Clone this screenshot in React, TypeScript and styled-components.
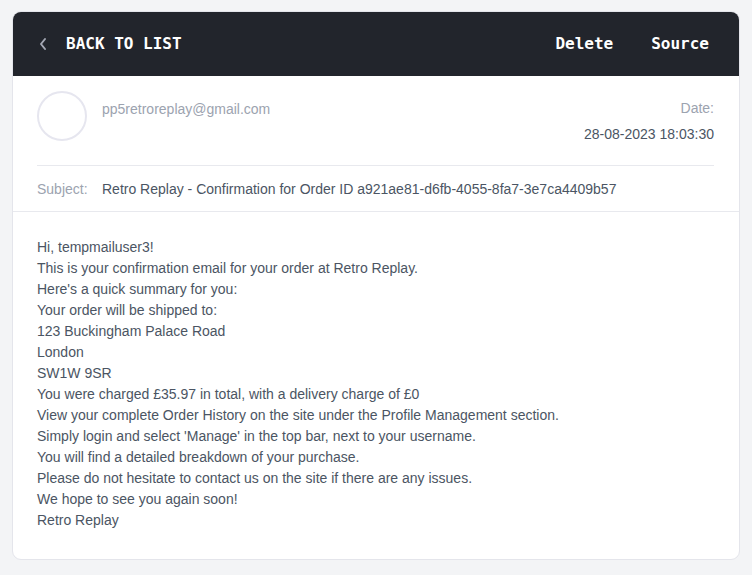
import React from "react";
import styled, { createGlobalStyle } from "styled-components";

const GlobalStyle = createGlobalStyle`
  html, body {
    margin: 0;
    padding: 0;
    background: #f3f4f6;
  }
  * { box-sizing: border-box; }
`;

const Page = styled.div`
  padding: 11px 12px 16px 12px;
  font-family: "Liberation Sans", Arial, sans-serif;
`;

const Card = styled.div`
  background: #ffffff;
  border: 1px solid #e4e5eb;
  border-radius: 9px;
  overflow: hidden;
`;

const TopBar = styled.div`
  display: flex;
  align-items: center;
  justify-content: space-between;
  height: 65px;
  margin: -1px -1px 0 -1px;
  padding: 0 31px 0 26px;
  background: #22252c;
  border-radius: 9px 9px 0 0;
  font-family: "DejaVu Sans Mono", "Liberation Mono", monospace;
  font-weight: bold;
  font-size: 16px;
  color: #ffffff;
`;

const BackLink = styled.div`
  display: flex;
  align-items: center;
  gap: 18px;
`;

const Actions = styled.div`
  display: flex;
  gap: 38px;
`;

const MetaSection = styled.div`
  padding: 15px 25px 0 24px;
`;

const SenderRow = styled.div`
  display: flex;
  justify-content: space-between;
  height: 75px;
  border-bottom: 1px solid #e8e9ee;
`;

const Sender = styled.div`
  display: flex;
  gap: 15px;
`;

const Avatar = styled.div`
  width: 50px;
  height: 50px;
  border-radius: 50%;
  border: 2px solid #e6e6ef;
`;

const Muted = styled.div`
  font-size: 14px;
  line-height: 16px;
  color: #9ca3af;
`;

const Email = styled(Muted)`
  padding-top: 10px;
`;

const DateBlock = styled.div`
  display: flex;
  flex-direction: column;
  align-items: flex-end;
  gap: 10px;
  padding-top: 9px;
`;

const Text = styled.div`
  font-size: 14px;
  line-height: 16px;
  color: #4b5563;
`;

const SubjectRow = styled.div`
  display: flex;
  align-items: center;
  height: 46px;
  padding: 0 24px;
  border-bottom: 1px solid #e8e9ee;
`;

const SubjectLabel = styled(Muted)`
  width: 65px;
`;

const Body = styled.div`
  padding: 25px 24px 28px 24px;
  font-size: 14px;
  line-height: 21px;
  color: #4b5563;
`;

const lines = [
  "Hi, tempmailuser3!",
  "This is your confirmation email for your order at Retro Replay.",
  "Here's a quick summary for you:",
  "Your order will be shipped to:",
  "123 Buckingham Palace Road",
  "London",
  "SW1W 9SR",
  "You were charged £35.97 in total, with a delivery charge of £0",
  "View your complete Order History on the site under the Profile Management section.",
  "Simply login and select 'Manage' in the top bar, next to your username.",
  "You will find a detailed breakdown of your purchase.",
  "Please do not hesitate to contact us on the site if there are any issues.",
  "We hope to see you again soon!",
  "Retro Replay",
];

function Chevron() {
  return (
    <svg width="10" height="14" viewBox="0 0 10 14" fill="none">
      <path d="M7 2L3 7l4 5" stroke="#a3a7b3" strokeWidth="2" strokeLinecap="round" strokeLinejoin="round" />
    </svg>
  );
}

export default function App() {
  return (
    <>
      <GlobalStyle />
      <Page>
        <Card>
          <TopBar>
            <BackLink>
              <Chevron />
              <span>BACK TO LIST</span>
            </BackLink>
            <Actions>
              <span>Delete</span>
              <span>Source</span>
            </Actions>
          </TopBar>
          <MetaSection>
            <SenderRow>
              <Sender>
                <Avatar />
                <Email>pp5retroreplay@gmail.com</Email>
              </Sender>
              <DateBlock>
                <Muted>Date:</Muted>
                <Text>28-08-2023 18:03:30</Text>
              </DateBlock>
            </SenderRow>
          </MetaSection>
          <SubjectRow>
            <SubjectLabel>Subject:</SubjectLabel>
            <Text>Retro Replay - Confirmation for Order ID a921ae81-d6fb-4055-8fa7-3e7ca4409b57</Text>
          </SubjectRow>
          <Body>
            {lines.map((l, i) => (
              <div key={i}>{l}</div>
            ))}
          </Body>
        </Card>
      </Page>
    </>
  );
}
